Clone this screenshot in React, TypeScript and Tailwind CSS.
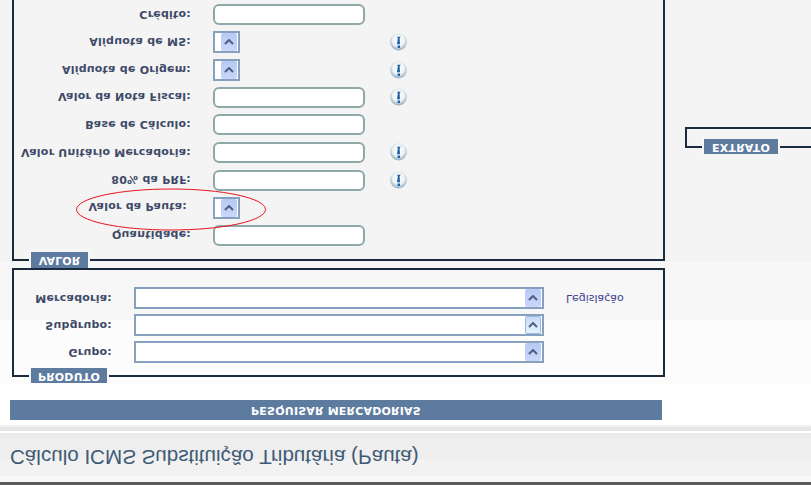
import React from 'react';

const Arrow: React.FC<{ hot?: boolean }> = ({ hot }) => (
  <span className={`flex h-[18px] w-[16px] items-center justify-center rounded-[2px] ${hot ? 'border border-[#9db8dc] bg-[linear-gradient(to_bottom,#e6f2ff,#c6dafa)]' : 'bg-[linear-gradient(to_bottom,#c9d6fb,#b7c9f3)]'}`}>
    <svg width="10" height="6" viewBox="0 0 10 6">
      <path d="M1 1 L5 5 L9 1" fill="none" stroke="#4a5f84" strokeWidth="2" />
    </svg>
  </span>
);

const InfoIcon: React.FC = () => (
  <svg width="17" height="18" viewBox="0 0 17 18" className="ml-[25px] shrink-0">
    <defs>
      <radialGradient id="glass" cx="50%" cy="60%" r="62%">
        <stop offset="0%" stopColor="#ffffff" />
        <stop offset="55%" stopColor="#eef3f5" />
        <stop offset="100%" stopColor="#88a3b8" />
      </radialGradient>
    </defs>
    <circle cx="8.5" cy="9" r="8.4" fill="url(#glass)" />
    <path d="M7.6 3 h2.4 v2.4 h-2.4z M7 6.8 h3 l-0.4 6 l1.1 1.4 h-3.6 l0.7 -1.4z" fill="#1f5fa3" />
  </svg>
);

const Input: React.FC = () => (
  <div className="h-[21px] w-[152px] rounded-[6px] border-2 border-[#8fa8a8] bg-white" />
);

const MiniSelect: React.FC = () => (
  <div className="flex h-[22px] w-[27px] items-center justify-end border-2 border-[#85a1bf] bg-white pr-[1px]">
    <Arrow />
  </div>
);

const WideSelect: React.FC<{ hot?: boolean }> = ({ hot }) => (
  <div className="flex h-[22px] w-[410px] items-center justify-end border-2 border-[#85a1bf] bg-white pr-[1px]">
    <Arrow hot={hot} />
  </div>
);

const Legend: React.FC<{ label: string; className: string }> = ({ label, className }) => (
  <div className={`absolute flex items-center justify-center border-x-2 border-[#f8f8f8] bg-[#5d7b9f] text-[11px] font-bold tracking-[0.2px] text-white ${className}`}>
    {label}
  </div>
);

const valorRows = [
  { label: 'Quantidade:', kind: 'input' },
  { label: 'Valor da Pauta:', kind: 'select', inset: true },
  { label: '80% da PRF:', kind: 'input', info: true },
  { label: 'Valor Unitário Mercadoria:', kind: 'input', info: true },
  { label: 'Base de Cálculo:', kind: 'input' },
  { label: 'Valor da Nota Fiscal:', kind: 'input', info: true },
  { label: 'Alíquota de Origem:', kind: 'select', info: true },
  { label: 'Alíquota de MS:', kind: 'select', info: true },
  { label: 'Crédito:', kind: 'input' },
];

const produtoRows = ['Grupo:', 'Subgrupo:', 'Mercadoria:'];

export default function App() {
  return (
    <div className="relative h-[485px] w-[811px] -scale-y-100 overflow-hidden bg-[linear-gradient(to_bottom,#ffffff_100px,#fcfcfc_100px,#fcfcfc_165px,#f7f7f7_165px,#f7f7f7_223px,#f4f4f4_223px)] font-['DejaVu_Sans',sans-serif] text-[#3e4a68]">
      <div className="h-[3px] bg-[#5a5a5a]" />
      <div className="flex h-[57px] items-start bg-[linear-gradient(to_bottom,#f7f7f7_6px,#f2f2f2_6px,#f2f2f2_23px,#eeeeee_23px,#eeeeee_43px,#e8e8e8_49px,#ffffff_49px,#ffffff_51px,#e4e4e4_51px,#e4e4e4_54px,#f5f5f5_57px)] pl-[10px] pt-[13px]">
        <h1 className="font-['Liberation_Sans',sans-serif] text-[20.6px] leading-6 font-normal text-[#3f5a75]">
          Cálculo ICMS Substituição Tributária (Pauta)
        </h1>
      </div>

      <div className="ml-[10px] mt-[5px] flex h-[20px] w-[652px] items-start justify-center bg-[#5d7b9f] pt-[2px] text-[11px] font-bold leading-4 tracking-[0.2px] text-white">
        PESQUISAR MERCADORIAS
      </div>

      <section className="relative ml-[12px] mt-[23px] h-[109px] w-[653px] border-2 border-[#1b2a3c] pt-[12px]">
        <Legend label="PRODUTO" className="left-[15px] top-[-8px] h-[15px] w-[80px]" />
        <div className="flex flex-col gap-[5px]">
          {produtoRows.map((label, i) => (
            <div key={label} className="flex items-center gap-[22px]">
              <span className="w-[98px] shrink-0 text-right text-[11px] font-bold tracking-[0.23px] whitespace-nowrap">{label}</span>
              <WideSelect hot={i === 1} />
              {i === 2 && <span className="text-[11px] text-[#3f4290]">Legislação</span>}
            </div>
          ))}
        </div>
      </section>

      <div className="mt-[7px] flex items-start">
        <section className="relative ml-[12px] h-[300px] w-[653px] shrink-0 border-2 border-[#1b2a3c] pt-[10px]">
          <Legend label="VALOR" className="left-[15px] top-[-9px] h-[16px] w-[61px]" />
          {valorRows.map((row) => (
            <div key={row.label} className="flex h-[27.6px] items-center">
              <span className={`shrink-0 text-right text-[11px] font-bold tracking-[0.23px] whitespace-nowrap ${row.inset ? 'mr-[26px] w-[173px] pt-[4px]' : 'mr-[22px] w-[177px] pt-[2px]'}`}>
                {row.label}
              </span>
              <div className="w-[152px] shrink-0">{row.kind === 'input' ? <Input /> : <MiniSelect />}</div>
              {row.info && <InfoIcon />}
            </div>
          ))}
        </section>
        <section className="relative ml-[20px] mt-[113px] h-[21px] w-[200px] shrink-0 border-2 border-[#1b2a3c]">
          <Legend label="EXTRATO" className="left-[15px] top-[-8px] h-[15px] w-[78px]" />
        </section>
      </div>

      <svg width="192" height="43" viewBox="0 0 192 43" className="absolute left-[75px] top-[254px]">
        <ellipse cx="96" cy="21.5" rx="94.5" ry="20.5" fill="none" stroke="#e8141c" strokeWidth="1" />
      </svg>
    </div>
  );
}
